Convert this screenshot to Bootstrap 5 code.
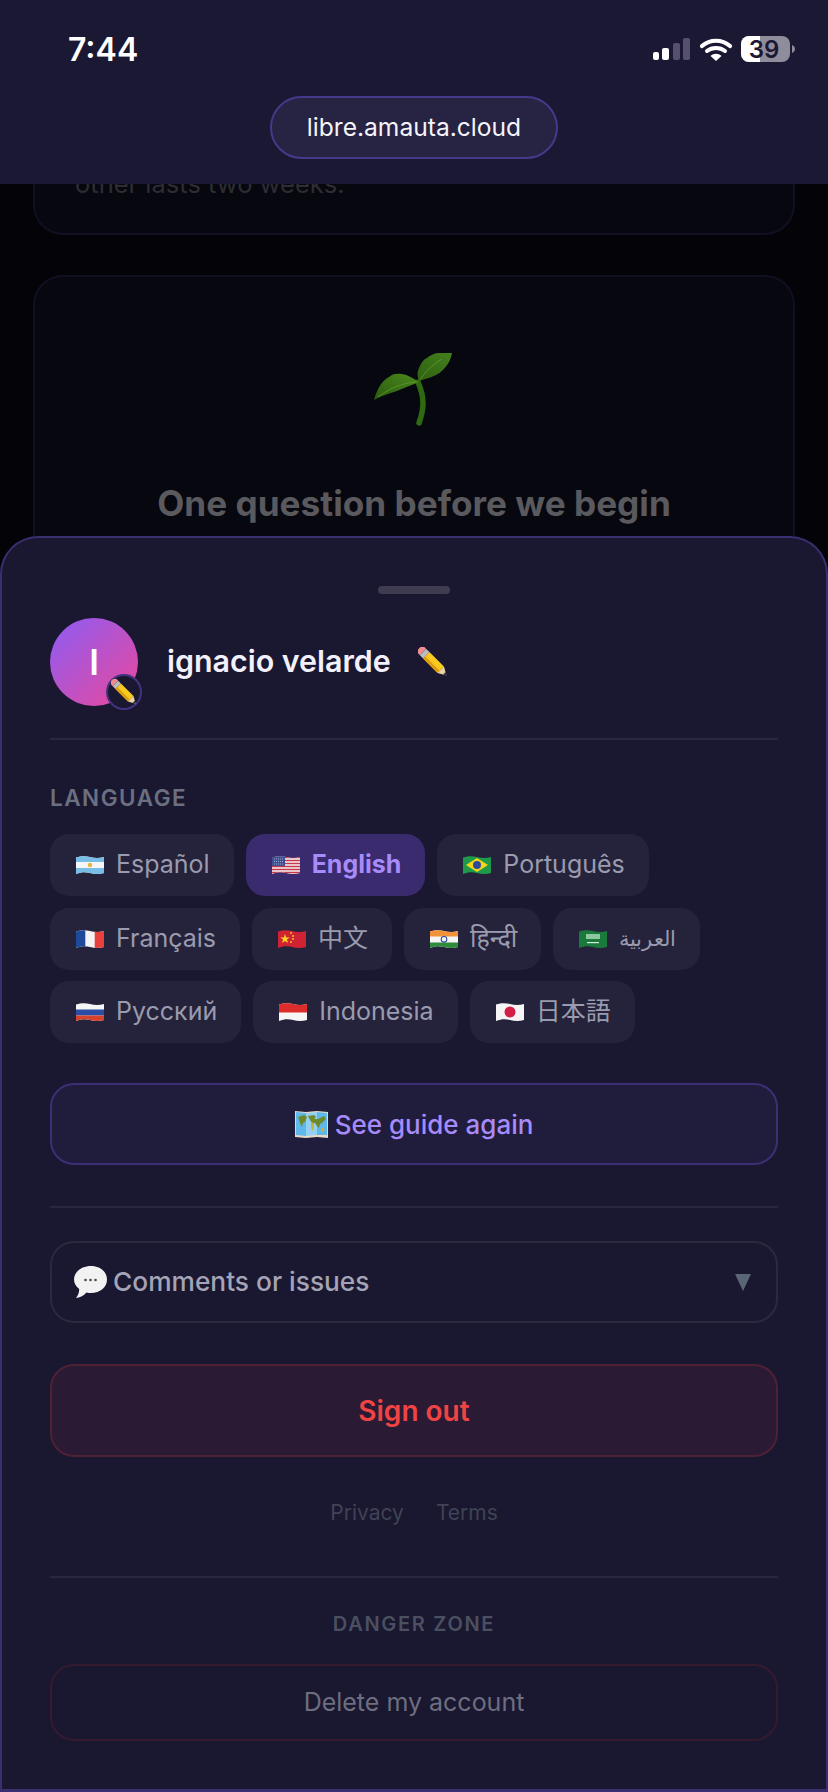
<!DOCTYPE html>
<html lang="en">
<head>
  <meta charset="UTF-8"/>
  <meta name="viewport" content="width=device-width, initial-scale=1.0"/>
  <title>Amauta - Profile sheet</title>
  <link rel="stylesheet" href="https://cdn.jsdelivr.net/npm/bootstrap@5.3.0/dist/css/bootstrap.min.css"/>
  <style>
    body { width: 828px; height: 1792px; overflow: hidden; background: #030308; font-family: Inter, "Noto Sans CJK SC", "Noto Sans", sans-serif; }
    .page-back { height: 1792px; padding: 0 33px; }
    .back-card { border: 2px solid #110f22; border-radius: 30px; background: #07070f; }
    .back-card-top { height: 235px; margin-bottom: 40px; border-top: 0; padding: 0 40px 29px; color: #2d2d33; font-size: 25.5px; line-height: 40px; }
    .back-card-main { height: 600px; padding-top: 75px; }
    .back-title { margin-top: 57px; color: #59595e; font-size: 35.2px; font-weight: 700; line-height: 40px; }

    .top-bar { height: 184px; background: #1b1833; }
    .clock { top: 29px; left: 68px; color: #fff; font-size: 32px; font-weight: 600; line-height: 42px; }
    .status-icons { top: 36px; left: 653px; }
    .url-pill { top: 96px; left: 270px; width: 288px; height: 63px; background: #272343; border: 2px solid #443a8a; border-radius: 32px; color: #f4f4fa; font-size: 24.6px; }

    .sheet { height: 1256px; background: #1a1731; border: 2px solid #3a2f70; border-bottom-width: 3px; border-radius: 38px 38px 0 0; padding: 0 48px; }
    .sheet-handle { width: 72px; height: 8px; margin: 48px auto 24px; background: #3f3c52; border-radius: 4px; }
    .avatar-wrap { width: 88px; height: 88px; }
    .avatar-round { width: 88px; height: 88px; border-radius: 50%; background: linear-gradient(135deg, #8b5cf6, #ec4899); color: #fff; font-size: 35px; font-weight: 600; }
    .avatar-edit { right: -4px; bottom: -4px; width: 36px; height: 36px; border-radius: 50%; background: #1a1731; border: 2px solid #43337f; }
    .user-name { margin-left: 29px; margin-right: 27px; color: #f1f0fb; font-size: 30.4px; font-weight: 600; }
    .rule-line { height: 2px; background: #29263f; }
    .sheet-head-rule { margin-top: 32px; }
    .lang-label { margin: 43px 0 21px; color: #6b7080; font-size: 22.5px; font-weight: 600; letter-spacing: 1.5px; line-height: 30px; }
    .lang-list { gap: 11.5px 12px; }
    .lang-chip { height: 62px; padding: 0 24px 0 26px; gap: 12px; border: 0; border-radius: 19px; background: #25233b; color: #9a9bae; font-size: 25px; white-space: nowrap; }
    .lang-chip.chip-on { background: #3a2a6e; color: #a78bfa; font-weight: 700; }
    .text-ar { font-size: 21px; }
    .big-btn { width: 100%; border-radius: 24px; font-size: 26px; }
    .btn-guide { height: 82px; margin-top: 40px; background: #201c3c; border: 2px solid #3c2f78; color: #a78bfa; font-weight: 500; gap: 7px; }
    .guide-rule { margin-top: 41px; }
    .btn-comments { height: 82px; margin-top: 33px; padding: 0 25px 0 22px; background: transparent; border: 2px solid #2b293f; color: #a4a4b6; font-size: 26.3px; font-weight: 500; gap: 6px; }
    .btn-signout { height: 93px; margin-top: 41px; background: #2b1a33; border: 2px solid #4f2135; color: #ef4444; font-size: 28px; font-weight: 600; }
    .legal-links { gap: 32px; margin-top: 41px; color: #3f4355; font-size: 21px; line-height: 30px; }
    .legal-rule { margin-top: 48px; }
    .danger-label { margin: 32px 0 26px; color: #4b5060; font-size: 20px; font-weight: 600; letter-spacing: 1.7px; line-height: 28px; text-align: center; }
    .btn-delete { height: 77px; background: transparent; border: 2px solid #361a30; color: #6d6e7e; font-size: 25px; }
  </style>
</head>
<body class="position-relative">
  <!-- page behind the sheet, dimmed -->
  <div class="page-back">
    <div class="back-card back-card-top d-flex align-items-end">other lasts two weeks.</div>
    <div class="back-card back-card-main text-center">
      <svg width="80" height="74" viewBox="0 0 80 74">
        <defs>
          <linearGradient id="leaf-top" x1="0" y1="1" x2="1" y2="0"><stop offset="0" stop-color="#2f6012"/><stop offset="1" stop-color="#44801c"/></linearGradient>
          <linearGradient id="leaf-left" x1="0" y1="1" x2="1" y2="0"><stop offset="0" stop-color="#2a5a10"/><stop offset="1" stop-color="#4a8a1c"/></linearGradient>
        </defs>
        <path d="M44 30c3 7 5 14 5 21 0 7-1.500 13-4 20" fill="none" stroke="#2f6a12" stroke-width="5.500" stroke-linecap="round"/>
        <path d="M45 29c-2-5-2-9 0-13 2-5 5-9 8-10 3-3 8-5 12-5h13c-.5 3-1.500 6-3 9-3 5-7 10-13 13-6 3-12 4-17 6z" fill="url(#leaf-top)"/>
        <path d="M46 28c5-8 12-15 22-21" fill="none" stroke="#5c9a30" stroke-width=".8"/>
        <path d="M45 30c-6-4-11-7-17-8-6-1-10 0-13 3C7 29 3 38 0 48c7-4 14-6 21.500-8.500C30 36 38 33 45 30z" fill="url(#leaf-left)"/>
        <path d="M42 30C28 31 14 37 4 45" fill="none" stroke="#5c9a30" stroke-width=".8"/>
      </svg>
      <div class="back-title">One question before we begin</div>
    </div>
  </div>

  <!-- top bar -->
  <div class="top-bar position-absolute top-0 start-0 end-0">
    <div class="clock position-absolute">7:44</div>
    <div class="status-icons position-absolute">
      <svg width="142" height="27" viewBox="0 0 142 27">
        <rect x="0" y="16" width="6" height="8" rx="2" fill="#fff"/>
        <rect x="9" y="12" width="7" height="12" rx="2" fill="#fff"/>
        <rect x="20" y="7" width="7" height="17" rx="2" fill="#55516c"/>
        <rect x="30" y="2" width="7" height="22" rx="2" fill="#55516c"/>
        <path d="M49 10c8-7 20-7 28 0" fill="none" stroke="#fff" stroke-width="4.200" stroke-linecap="round"/>
        <path d="M54 15c5-4 13-4 18 0" fill="none" stroke="#fff" stroke-width="4" stroke-linecap="round"/>
        <path d="M57.500 20c3-3 8-3 11 0l-5.500 5z" fill="#fff"/>
        <rect x="88" y="0" width="49" height="26" rx="8" fill="#8f8d9c"/>
        <path d="M96 0h11v26H96a8 8 0 0 1-8-8V8a8 8 0 0 1 8-8z" fill="#fff"/>
        <path d="M139 9c2 1 3 2.500 3 4s-1 3-3 4z" fill="#8f8d9c"/>
        <text x="111" y="21.500" text-anchor="middle" font-family="Inter, sans-serif" font-size="24" font-weight="600" fill="#1b1833">39</text>
      </svg>
    </div>
    <div class="url-pill position-absolute d-flex align-items-center justify-content-center">libre.amauta.cloud</div>
  </div>

  <!-- bottom sheet -->
  <div class="sheet position-absolute bottom-0 start-0 end-0">
    <div class="sheet-handle"></div>

    <div class="d-flex align-items-center">
      <div class="avatar-wrap position-relative">
        <div class="avatar-round d-flex align-items-center justify-content-center">I</div>
        <div class="avatar-edit position-absolute d-flex align-items-center justify-content-center">
          <svg width="26" height="26" viewBox="0 0 30 30"><use href="#pencil"/></svg>
        </div>
      </div>
      <span class="user-name">ignacio velarde</span>
      <svg width="30" height="30" viewBox="0 0 30 30"><use href="#pencil"/></svg>
    </div>
    <div class="rule-line sheet-head-rule"></div>

    <div class="lang-label">LANGUAGE</div>
    <div class="d-flex flex-wrap lang-list">
      <button class="lang-chip d-flex align-items-center" type="button"><svg width="28" height="20" viewBox="0 0 28 20"><use href="#flag-ar"/></svg>Español</button>
      <button class="lang-chip chip-on d-flex align-items-center" type="button"><svg width="28" height="20" viewBox="0 0 28 20"><use href="#flag-us"/></svg>English</button>
      <button class="lang-chip d-flex align-items-center" type="button"><svg width="28" height="20" viewBox="0 0 28 20"><use href="#flag-br"/></svg>Português</button>
      <button class="lang-chip d-flex align-items-center" type="button"><svg width="28" height="20" viewBox="0 0 28 20"><use href="#flag-fr"/></svg>Français</button>
      <button class="lang-chip d-flex align-items-center" type="button"><svg width="28" height="20" viewBox="0 0 28 20"><use href="#flag-cn"/></svg>中文</button>
      <button class="lang-chip d-flex align-items-center" type="button"><svg width="28" height="20" viewBox="0 0 28 20"><use href="#flag-in"/></svg>हिन्दी</button>
      <button class="lang-chip d-flex align-items-center" type="button"><svg width="28" height="20" viewBox="0 0 28 20"><use href="#flag-sa"/></svg><span class="text-ar">العربية</span></button>
      <button class="lang-chip d-flex align-items-center" type="button"><svg width="28" height="20" viewBox="0 0 28 20"><use href="#flag-ru"/></svg>Русский</button>
      <button class="lang-chip d-flex align-items-center" type="button"><svg width="28" height="20" viewBox="0 0 28 20"><use href="#flag-id"/></svg>Indonesia</button>
      <button class="lang-chip d-flex align-items-center" type="button"><svg width="28" height="20" viewBox="0 0 28 20"><use href="#flag-jp"/></svg><span lang="ja">日本語</span></button>
    </div>

    <button class="btn-guide big-btn d-flex align-items-center justify-content-center" type="button">
      <svg width="33" height="29" viewBox="0 0 33 29">
        <path d="M0 1l11 1 11-1 11 1v26l-11-1-11 1-11-1z" fill="#e9d9c4"/>
        <path d="M1 2l10 1v23L1 25z" fill="#5fb7ea"/>
        <path d="M11 3l11-1v23l-11 1z" fill="#93d0f2"/>
        <path d="M22 2l10 1v22l-10-0z" fill="#5fb7ea"/>
        <path d="M3 7l6-2 3 2-2 5-2 1-1 4-2-4zM13 6l6-1 2 2-2 2 4 0 6-3 2 3-4 4-2 1-1 4-2-2-2-3-3 0-2-3z" fill="#6f8a2a"/>
        <path d="M16 12l3 1 0 5-2 3-1-4zM26 18l3 0 0 3-3 1z" fill="#c9b23a"/>
      </svg>
      See guide again
    </button>

    <div class="rule-line guide-rule"></div>

    <button class="btn-comments big-btn d-flex align-items-center" type="button">
      <svg width="33" height="32" viewBox="0 0 33 32">
        <path d="M17 0c9 0 16 5.500 16 13.500S26 27 17 27c-1.500 0-3-.2-4.500-.6C10.500 29 7 31 2 32c2-2.500 3.200-5.500 3.200-9C2 20.500 0 17.500 0 13.500 0 5.500 8 0 17 0z" fill="#f2f2f2"/>
        <circle cx="11.500" cy="14" r="1.300" fill="#4a4a4a"/><circle cx="16.500" cy="14" r="1.300" fill="#4a4a4a"/><circle cx="21.500" cy="14" r="1.300" fill="#4a4a4a"/>
      </svg>
      <span class="flex-grow-1 text-start">Comments or issues</span>
      <svg width="16" height="17" viewBox="0 0 16 17"><path d="M0 0h16L8 17z" fill="#5a6675"/></svg>
    </button>

    <button class="btn-signout big-btn" type="button">Sign out</button>

    <div class="legal-links d-flex justify-content-center"><span>Privacy</span><span>Terms</span></div>

    <div class="rule-line legal-rule"></div>
    <div class="danger-label">DANGER ZONE</div>
    <button class="btn-delete big-btn" type="button">Delete my account</button>
  </div>

  <!-- hand-drawn emoji shapes -->
  <svg width="0" height="0" class="position-absolute">
    <defs>
      <g id="pencil" transform="rotate(45 15 15)">
        <path d="M1 10.500h-3a2.500 2.500 0 0 0-2.500 2.500v4a2.500 2.500 0 0 0 2.500 2.500h3z" fill="#ee8d8d"/>
        <rect x="1" y="10.500" width="4.500" height="9" fill="#b9bcc4"/>
        <rect x="5.500" y="10.500" width="20.500" height="9" fill="#f8ca1f"/>
        <rect x="5.500" y="16.500" width="20.500" height="3" fill="#dd9d12"/>
        <path d="M26 10.500l8 4.500-8 4.500z" fill="#edd3a6"/>
        <path d="M31 13.300l3 1.700-3 1.700z" fill="#2e2e33"/>
      </g>
      <clipPath id="wave"><path d="M0 2.500C6 .5 10 1 14 2s9 1.500 14 0v16c-5 1.500-10 1-14 0S6 16.500 0 19z"/></clipPath>
      <g id="flag-ar" clip-path="url(#wave)"><rect width="28" height="20" fill="#f4f6f8"/><rect width="28" height="7" fill="#78bde8"/><rect y="13" width="28" height="7" fill="#78bde8"/><circle cx="14" cy="10" r="2.200" fill="#f2b13c"/></g>
      <g id="flag-us" clip-path="url(#wave)"><rect width="28" height="20" fill="#f4f4f4"/><path d="M0 2.500h28M0 5.500h28M0 8.500h28M0 11.500h28M0 14.500h28M0 17.500h28" stroke="#c8374a" stroke-width="1.500"/><rect width="13" height="11" fill="#3c4f8f"/><path d="M2 4h9M2 6.500h9M2 9h9" stroke="#aab4d8" stroke-width=".9" stroke-dasharray="1 1"/></g>
      <g id="flag-br" clip-path="url(#wave)"><rect width="28" height="20" fill="#1f9a4b"/><path d="M14 3l11 7-11 7-11-7z" fill="#f7d417"/><circle cx="14" cy="10" r="4" fill="#2d4a9a"/></g>
      <g id="flag-fr" clip-path="url(#wave)"><rect width="28" height="20" fill="#f4f4f4"/><rect width="9.300" height="20" fill="#1f4a9c"/><rect x="18.700" width="9.300" height="20" fill="#e8413c"/></g>
      <g id="flag-cn" clip-path="url(#wave)"><rect width="28" height="20" fill="#cf2233"/><path d="M7 5l1.200 3.400 3.600 0-2.900 2.200 1.100 3.400-3-2.100-3 2.100 1.100-3.400-2.900-2.200 3.600 0z" fill="#fbd324"/><circle cx="13" cy="4" r=".9" fill="#fbd324"/><circle cx="15" cy="7" r=".9" fill="#fbd324"/><circle cx="15" cy="10" r=".9" fill="#fbd324"/><circle cx="13" cy="13" r=".9" fill="#fbd324"/></g>
      <g id="flag-in" clip-path="url(#wave)"><rect width="28" height="20" fill="#f5f5f5"/><rect width="28" height="7.500" fill="#f2933a"/><rect y="13.500" width="28" height="6.500" fill="#2f8c3a"/><circle cx="14" cy="10.300" r="2.800" fill="none" stroke="#2d4a9a" stroke-width="1.100"/></g>
      <g id="flag-sa" clip-path="url(#wave)"><rect width="28" height="20" fill="#1a7a3c"/><rect x="7" y="5" width="14" height="5" fill="#8fc7a0"/><rect x="8" y="13" width="12" height="1.200" fill="#d8ecde"/></g>
      <g id="flag-ru" clip-path="url(#wave)"><rect width="28" height="20" fill="#f5f5f5"/><rect y="7.500" width="28" height="6" fill="#2c4da5"/><rect y="13.500" width="28" height="6.500" fill="#d5432f"/></g>
      <g id="flag-id" clip-path="url(#wave)"><rect width="28" height="20" fill="#f5f5f5"/><rect width="28" height="10.500" fill="#dd2c2c"/></g>
      <g id="flag-jp" clip-path="url(#wave)"><rect width="28" height="20" fill="#f5f5f5"/><circle cx="14" cy="10" r="5.500" fill="#d31f47"/></g>
    </defs>
  </svg>

  <script src="https://cdn.jsdelivr.net/npm/bootstrap@5.3.0/dist/js/bootstrap.bundle.min.js"></script>
</body>
</html>
